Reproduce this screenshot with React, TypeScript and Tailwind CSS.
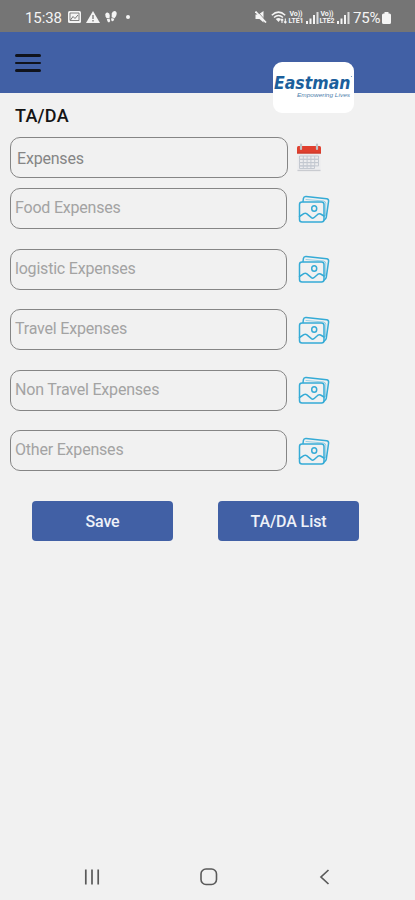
import React from 'react';

const fields = ['Food Expenses', 'logistic Expenses', 'Travel Expenses', 'Non Travel Expenses', 'Other Expenses'];

const Signal = ({ sim }: { sim: string }) => (
  <div className="flex items-center">
    <div className="w-[16px] text-center text-[7px] leading-[6.5px] font-bold tracking-[-0.1px]">
      <div>Vo))</div>
      <div>LTE{sim}</div>
    </div>
    <svg className="ml-[2px]" width="13" height="12" viewBox="0 0 13 12" fill="currentColor">
      <rect x="0" y="9" width="2" height="3" />
      <rect x="3.5" y="6.5" width="2" height="5.5" />
      <rect x="7" y="3" width="2" height="9" />
      <rect x="10.5" y="0" width="2" height="12" opacity="0.8" />
    </svg>
  </div>
);

const StatusBar = () => (
  <div className="flex h-8 items-center bg-[#757575] pt-[3px] pl-[25px] text-[#f4f4f4]">
    <span className="w-[37px] text-[15px] leading-4 tracking-[-0.1px]">15:38</span>
    <svg className="ml-[6px] mt-[-1px]" width="13" height="12" viewBox="0 0 13 12">
      <rect width="13" height="12" rx="1.5" fill="currentColor" />
      <path d="M2 2h9v7.500H2z" fill="none" stroke="#757575" strokeWidth="0.900" />
      <path d="M2.500 9l2.500-3.500 2 2 3-3.500" fill="none" stroke="#757575" strokeWidth="1" />
    </svg>
    <svg className="ml-[5px] mt-[-1px]" width="14" height="12" viewBox="0 0 14 12">
      <path d="M7 0l7 12H0z" fill="currentColor" />
      <path d="M7 4v4M7 9v1.500" stroke="#757575" strokeWidth="1.300" />
    </svg>
    <svg className="ml-[5px] mt-[-1px]" width="12" height="12" viewBox="0 0 12 12" fill="currentColor">
      <path d="M0.300 3.500Q0.600 1.300 2.500 1.500Q4.800 1.800 4.800 4.500L4.500 6.900L1.600 7.300Q0.100 5.500 0.300 3.500z" />
      <path d="M1.900 7.900l2.700-.4Q5.700 10 4.400 11.200Q2.400 11.700 1.900 7.900z" />
      <path d="M6.800 2.500Q7.300 0 9.500 0Q11.900 0.300 11.700 3Q11.400 5.500 9.600 7.200L6.600 6.200z" />
      <path d="M6.400 6.900l2.900.9Q8.700 10.700 7 10.300Q5.500 9.600 6.400 6.900z" />
    </svg>
    <span className="ml-[9px] mt-[-2px] h-[4px] w-[4px] rounded-full bg-current" />
    <div className="ml-auto flex items-center pr-[23px]">
      <svg className="mt-[-1px]" width="12" height="12" viewBox="0 0 12 12">
        <path d="M0.500 3.500h3l5-3.500v11.500l-4-3.500h-4z" fill="currentColor" />
        <path d="M2 0l10 11" stroke="#757575" strokeWidth="0.900" />
        <path d="M0.500 0.500l10.500 11" stroke="currentColor" strokeWidth="1.700" />
      </svg>
      <svg className="ml-[4px]" width="17" height="13" viewBox="0 0 17 13">
        <path d="M0.800 4.200Q7.500-2 14.200 4.200M3 6.500Q7.500 2.500 12 6.500" fill="none" stroke="currentColor" strokeWidth="1.500" />
        <path d="M4.800 8Q7.500 5.800 10 8L7.500 11z" fill="currentColor" />
        <path d="M11 12V8M9.700 9.300L11 8l1.300 1.300M14.300 7.500v4.500M13 10.700l1.300 1.300 1.300-1.300" fill="none" stroke="currentColor" strokeWidth="1.100" />
      </svg>
      <Signal sim="1" />
      <Signal sim="2" />
      <span className="ml-[3px] w-[29px] text-[15px] leading-4 tracking-[-0.2px]">75%</span>
      <svg className="mr-px" width="9" height="12" viewBox="0 0 9 12" fill="currentColor">
        <path d="M2.500 0h4v1.500h1Q9 1.500 9 3v7.500Q9 12 7.500 12h-6Q0 12 0 10.500V3Q0 1.500 1.500 1.500h1z" />
      </svg>
    </div>
  </div>
);

const Header = () => (
  <div className="relative flex h-[61px] items-center bg-[#4160a5] pt-[1px] pl-[15px]">
    <div className="flex w-[26px] flex-col gap-[5px]">
      <span className="h-[2.5px] rounded-sm bg-[#10131c]" />
      <span className="h-[2.5px] rounded-sm bg-[#10131c]" />
      <span className="h-[2.5px] rounded-sm bg-[#10131c]" />
    </div>
    <div className="absolute top-[30px] left-[273px] h-[51px] w-[81px] rounded-[9px] bg-white">
      <svg width="81" height="51" viewBox="0 0 81 51" fontStyle="italic">
        <text x="1" y="27" fontFamily="'DejaVu Sans', sans-serif" fontSize="17.500" fontWeight="700" fill="#1c5f9c" textLength="76.500" lengthAdjust="spacingAndGlyphs">Eastman</text>
        <text x="24" y="35" fontFamily="'Liberation Sans', sans-serif" fontSize="5.500" fill="#4f80ac" textLength="53" lengthAdjust="spacingAndGlyphs">Empowering Lives</text>
        <circle cx="78.500" cy="14.500" r="0.600" fill="#5f8fb8" />
      </svg>
    </div>
  </div>
);

const CalendarIcon = () => (
  <svg width="26" height="29" viewBox="0 0 26 29">
    <rect x="1.500" y="11" width="23" height="17" fill="#ececee" />
    <path d="M1.500 27.500h23" stroke="#c9cbd0" strokeWidth="1.300" />
    <path d="M3.500 13h19v3.300h-19zM3.500 16.300h19v3.300h-19zM3.500 19.600h19v3.300h-19zM3.500 22.900h15v2.600h-15zM7.300 13v12.500M11.100 13v12.500M14.900 13v12.500M18.700 13v10" fill="none" stroke="#c3c8d0" strokeWidth="1" />
    <path d="M2.500 3h21q1.500 0 1.500 1.500V10.500H1V4.500Q1 3 2.500 3z" fill="#e0402f" />
    <path d="M1 9.500h24v1H1z" fill="#c7382b" />
    <path d="M5 1.500v4.500M21 1.500v4.500" stroke="#bdc5c8" strokeWidth="2.200" strokeLinecap="round" />
  </svg>
);

const PhotosIcon = () => (
  <svg width="32" height="29" viewBox="0 0 32 29" fill="none" stroke="#35abd6" strokeWidth="1.500" strokeLinejoin="round" strokeLinecap="round">
    <rect x="1.500" y="7" width="24.500" height="20" rx="2.500" />
    <path d="M5 6.500l.4-3q.4-2.200 2.700-2l20.500 2.200q2.200.3 2 2.500l-2.300 16q-.3 2-2.200 3" />
    <path d="M8 4.500l17.500 1.500q2.300.3 2.300 2.500l-.3 12" strokeWidth="0.700" opacity="0.700" />
    <path d="M1.500 21.500l4.300-2.800q1.500-.9 2.800 0l4.800 4q1.200.9 2.500 0l4-3.500q1.300-1 2.700-.2l3.400 2" />
    <ellipse cx="16.200" cy="13.500" rx="2.500" ry="2.800" />
  </svg>
);

const AndroidNav = () => (
  <div className="flex h-[46px] items-center justify-between pr-[83px] pl-[84px] text-[#5a5a5a]">
    <svg width="16" height="16" viewBox="0 0 16 16" stroke="currentColor" strokeWidth="1.700">
      <path d="M1.800 0.500v15M8 0.500v15M14.200 0.500v15" />
    </svg>
    <svg width="18" height="18" viewBox="0 0 18 18" fill="none" stroke="currentColor" strokeWidth="1.600">
      <rect x="1" y="1" width="15.500" height="15.500" rx="5" />
    </svg>
    <svg width="14" height="16" viewBox="0 0 14 16" fill="none" stroke="currentColor" strokeWidth="1.700">
      <path d="M10.500 1L3 8l7.500 7" />
    </svg>
  </div>
);

const App = () => (
  <div className="flex h-[900px] w-full flex-col bg-[#f1f1f1] font-['Roboto',sans-serif]">
    <StatusBar />
    <Header />
    <main className="flex-1">
      <h1 className="mt-[13px] ml-[15px] text-[18px] leading-5 font-medium tracking-[0.25px] text-[#141414]">TA/DA</h1>
      <div className="mt-[11px] flex items-center pl-[10px]">
        <div className="flex h-[41px] w-[278px] items-center rounded-[10px] border-[1.5px] border-[#858585] pt-[2px] pl-[6px] text-[16px] tracking-[-0.2px] text-[#858585]">Expenses</div>
        <div className="ml-[8px]">
          <CalendarIcon />
        </div>
      </div>
      <div className="mt-[10px] flex flex-col gap-[19.5px] pl-[10px]">
        {fields.map((field) => (
          <div key={field} className="flex h-[41px] items-center">
            <div className="flex h-full w-[277px] items-center rounded-[10px] border-[1.5px] border-[#858585] pb-px pl-[4px] text-[16px] tracking-[-0.2px] text-[#a3a3a3]">{field}</div>
            <div className="ml-[11px] pt-px">
              <PhotosIcon />
            </div>
          </div>
        ))}
      </div>
      <div className="mt-[30px] flex gap-[45px] pl-[32px] text-[16px] font-medium text-[#eef1f8]">
        <button className="h-10 w-[141px] rounded-[4px] bg-[#4160a5] pt-[2px] tracking-[-0.1px]">Save</button>
        <button className="h-10 w-[141px] rounded-[4px] bg-[#4160a5] pt-[2px] tracking-[-0.1px]">TA/DA List</button>
      </div>
    </main>
    <AndroidNav />
  </div>
);

export default App;
